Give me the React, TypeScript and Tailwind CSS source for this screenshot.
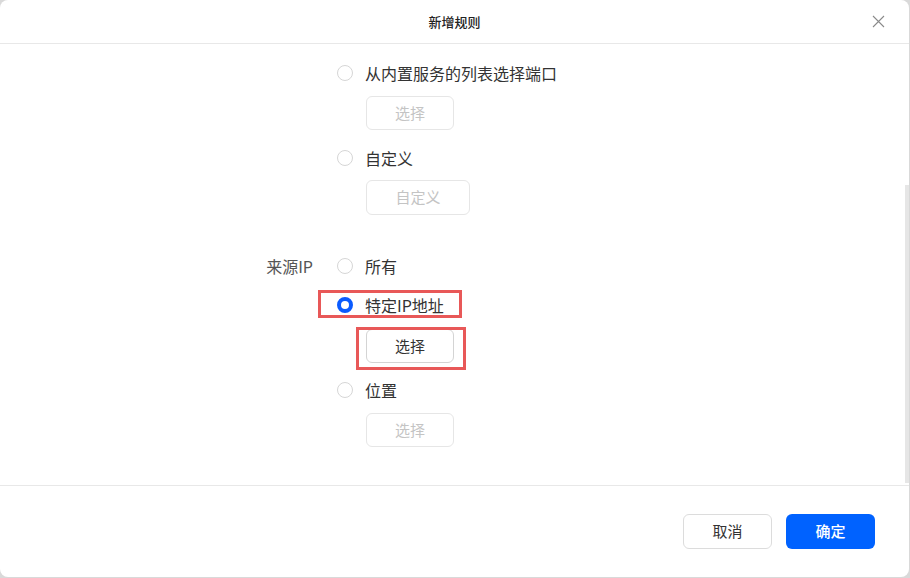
import React from "react";

const font = { fontFamily: '"Noto Sans CJK SC", "Noto Sans", sans-serif' };

function Radio({ checked = false, className = "" }: { checked?: boolean; className?: string }) {
  return checked ? (
    <span className={`box-border inline-block h-[16px] w-[16px] shrink-0 rounded-full border-[4px] border-[#0a5bff] bg-white ${className}`} />
  ) : (
    <span className={`box-border inline-block h-[16px] w-[16px] shrink-0 rounded-full border border-[#d6d6d6] bg-white ${className}`} />
  );
}

function Option({ label, checked = false, className = "" }: { label: string; checked?: boolean; className?: string }) {
  return (
    <div className={`flex h-[24px] items-center ${className}`}>
      <Radio checked={checked} className="ml-[337px]" />
      <span className="ml-[12px] text-[16px] text-[#333333]">{label}</span>
    </div>
  );
}

function Btn({ label, disabled = true, w = "w-[88px]", className = "" }: { label: string; disabled?: boolean; w?: string; className?: string }) {
  return (
    <div
      className={`ml-[366px] flex h-[34px] ${w} items-center justify-center rounded-[6px] border text-[15px] ${
        disabled ? "border-[#e6e6e6] text-[#c4c4c4]" : "border-[#d4d4d4] text-[#333333]"
      } ${className}`}
    >
      {label}
    </div>
  );
}

export default function App() {
  return (
    <div className="h-[578px] w-[910px] bg-[#d9d9d9]" style={font}>
      <div className="relative flex h-[577px] w-[909px] flex-col overflow-hidden rounded-[8px] bg-white">
        {/* header */}
        <div className="relative flex h-[44px] shrink-0 items-center justify-center border-b border-[#e8e8e8]">
          <span className="text-[13px] font-medium text-[#222222]">新增规则</span>
          <svg className="absolute right-[24px] top-[15px]" width="13" height="13" viewBox="0 0 13 13">
            <path d="M1 1L12 12M12 1L1 12" stroke="#8a8a8a" strokeWidth="1.1" fill="none" />
          </svg>
        </div>

        {/* body */}
        <div className="relative flex-1 pt-[17px]">
          <Option label="从内置服务的列表选择端口" />
          <Btn label="选择" className="mt-[11px]" />
          <Option label="自定义" className="mt-[16px]" />
          <Btn label="自定义" w="w-[104px]" className="mt-[10px] h-[35px]" />

          <div className="mt-[39px] flex h-[24px] items-center">
            <span className="w-[313px] text-right text-[16px] text-[#555555]">来源IP</span>
            <Radio className="ml-[24px]" />
            <span className="ml-[12px] text-[16px] text-[#333333]">所有</span>
          </div>
          <Option label="特定IP地址" checked className="mt-[15px]" />
          <Btn label="选择" disabled={false} className="mt-[12px]" />
          <Option label="位置" className="mt-[15px]" />
          <Btn label="选择" className="mt-[11px]" />

          {/* highlight boxes */}
          <div className="absolute left-[318px] top-[246px] h-[28px] w-[144px] border-[3px] border-[#e85858]" />
          <div className="absolute left-[356px] top-[283px] h-[43px] w-[110px] border-[3px] border-[#e85858]" />

          {/* scrollbar thumb */}
          <div className="absolute right-0 top-[141px] h-[298px] w-[4px] bg-[#e6e6e6]" />
        </div>

        {/* footer */}
        <div className="flex h-[92px] shrink-0 items-center justify-end gap-[14px] border-t border-[#e8e8e8] pr-[34px]">
          <button className="h-[35px] w-[89px] rounded-[6px] border border-[#dcdcdc] bg-white text-[15px] text-[#333333]">
            取消
          </button>
          <button className="h-[35px] w-[89px] rounded-[6px] bg-[#0062ff] text-[15px] font-medium text-white">
            确定
          </button>
        </div>
      </div>
    </div>
  );
}
